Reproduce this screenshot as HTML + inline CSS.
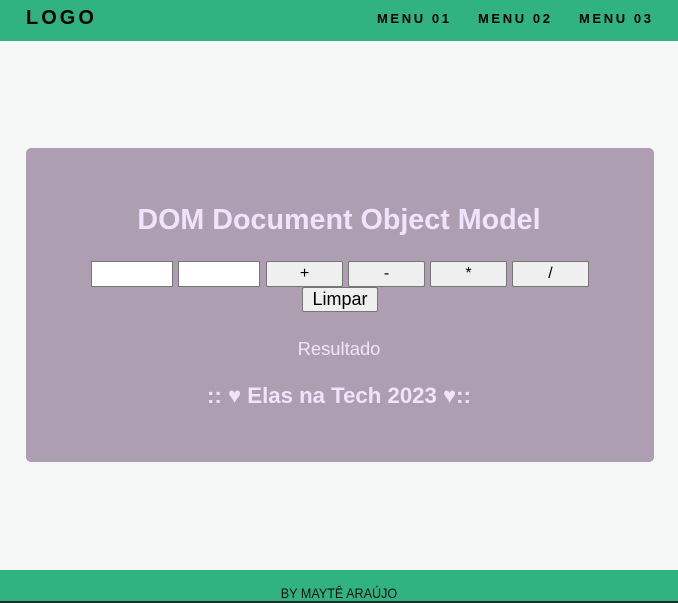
<!DOCTYPE html>
<html><head><meta charset="utf-8"><style>
*{margin:0;padding:0;box-sizing:border-box}
body{width:678px;height:603px;background:#f6f8f7;font-family:"Liberation Sans",Arial,sans-serif;position:relative;overflow:hidden}
.hdr{position:absolute;left:0;top:0;width:678px;height:41px;background:#30b381}
.logo{position:absolute;left:26px;top:7px;font-size:20px;font-weight:900;letter-spacing:3px;color:#000}
.menu{position:absolute;top:11px;font-size:13px;font-weight:bold;letter-spacing:2.6px;color:#000}
.card{position:absolute;left:26px;top:148px;width:628px;height:314px;background:#ae9eb2;border-radius:5px}
.t{position:absolute;left:0;width:678px;text-align:center;color:#efe4fb}
.box{position:absolute;top:261px;height:26px;border:1px solid #767676;font-size:16px;text-align:center;line-height:24px;color:#000}
.in{background:#fff;width:82px}
.bt{background:#efefef;width:77px;border-radius:2px}
.foot{position:absolute;left:0;top:570px;width:678px;height:31px;background:#30b381}
.line{position:absolute;left:0;top:601px;width:678px;height:2px;background:#1d2a24}
</style></head><body>
<div class="hdr">
<div class="logo">LOGO</div>
<div class="menu" style="left:377px">MENU 01</div>
<div class="menu" style="left:478px">MENU 02</div>
<div class="menu" style="left:579px">MENU 03</div>
</div>
<div class="card"></div>
<div class="t" style="top:204px;font-size:28.7px;font-weight:bold">DOM Document Object Model</div>
<div class="box in" style="left:91px"></div>
<div class="box in" style="left:178px"></div>
<div class="box bt" style="left:266px">+</div>
<div class="box bt" style="left:348px">-</div>
<div class="box bt" style="left:430px">*</div>
<div class="box bt" style="left:512px">/</div>
<div class="box bt" style="left:302px;top:287px;width:76px;height:25px;font-size:18px;line-height:22px">Limpar</div>
<div class="t" style="top:338px;font-size:18.4px">Resultado</div>
<div class="t" style="top:383px;font-size:22.2px;font-weight:bold">:: ♥ Elas na Tech 2023 ♥::</div>
<div class="foot"></div>
<div class="line"></div>
<div class="t" style="top:585px;font-size:14px;color:#111;transform:scaleX(0.9)">BY MAYTÊ ARAÚJO</div>
</body></html>
